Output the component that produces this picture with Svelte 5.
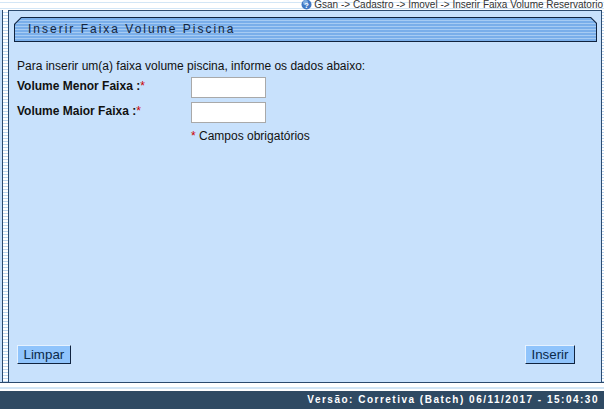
<script>
  let menor = '';
  let maior = '';
</script>

<div class="page">
  <div class="crumbs">
    <svg class="help" width="11" height="11" viewBox="0 0 11 11">
      <circle cx="5.5" cy="5.5" r="5" fill="#3f78c4" />
      <circle cx="4.5" cy="3.5" r="2.5" fill="#9cc3ee" opacity="0.7" />
      <text x="5.5" y="9" text-anchor="middle" class="q">?</text>
    </svg>
    <span>Gsan -&gt; Cadastro -&gt; Imovel -&gt; Inserir Faixa Volume Reservatorio</span>
  </div>

  <div class="middle">
    <div class="rail"></div>
    <main class="panel">
      <div class="title">
        <div class="title-inner">Inserir Faixa Volume Piscina</div>
      </div>

      <p class="intro">Para inserir um(a) faixa volume piscina, informe os dados abaixo:</p>

      <div class="row">
        <label for="menor">Volume Menor Faixa :<em>*</em></label>
        <input id="menor" bind:value={menor} />
      </div>
      <div class="row">
        <label for="maior">Volume Maior Faixa :<em>*</em></label>
        <input id="maior" bind:value={maior} />
      </div>
      <div class="required"><em>*</em> Campos obrigatórios</div>

      <div class="actions">
        <button>Limpar</button>
        <button>Inserir</button>
      </div>
    </main>
    <div class="rail-right"></div>
  </div>

  <div class="sep"></div>
  <footer>Versão: Corretiva (Batch) 06/11/2017 - 15:04:30</footer>
</div>

<style>
  :global(body) {
    margin: 0;
    background: #fff;
  }

  .page {
    width: 604px;
    height: 409px;
    display: flex;
    flex-direction: column;
    overflow: hidden;
    font-family: "Liberation Sans", Arial, sans-serif;
    font-size: 12px;
    color: #000;
  }

  .crumbs {
    height: 10px;
    flex: none;
    display: flex;
    justify-content: flex-end;
    align-items: center;
    gap: 2px;
    padding-right: 1px;
    font-size: 10px;
    line-height: 10px;
    color: #333;
    background: linear-gradient(to bottom, #fff 0 2px, #d3e6f6 2px 3px, #fff 3px 8px, #d3e6f6 8px 9px, #fff 9px);
  }

  .help {
    flex: none;
    margin-top: -1px;
  }

  .q {
    font-size: 8px;
    font-weight: bold;
    fill: #fff;
  }

  .middle {
    height: 372px;
    flex: none;
    display: flex;
    border-bottom: 1px solid #2c4a6e;
  }

  .rail {
    width: 8px;
    flex: none;
    box-sizing: border-box;
    border-left: 2px solid #c8e1fc;
    background: repeating-linear-gradient(to bottom, #fff 0 2px, #bcd6f0 2px 3px);
  }

  .rail::before {
    content: "";
    display: block;
    width: 1px;
    height: 100%;
    background: #2c4a6e;
  }

  .rail-right {
    width: 2px;
    flex: none;
    background: repeating-linear-gradient(to bottom, #fff 0 2px, #bcd6f0 2px 3px);
  }

  .panel {
    width: 594px;
    flex: none;
    box-sizing: border-box;
    padding: 6px 4px 0 5px;
    display: flex;
    flex-direction: column;
    background: #c8e1fc;
    border: 1px solid #2c4a6e;
    border-bottom: 0;
  }

  .title {
    height: 25px;
    box-sizing: border-box;
    flex: none;
    padding: 1px;
    background: #10233f;
    clip-path: polygon(7px 0, calc(100% - 6px) 0, 100% 6px, 100% 100%, 0 100%, 0 7px);
  }

  .title-inner {
    height: 23px;
    box-sizing: border-box;
    padding: 4px 0 0 13px;
    font-size: 12px;
    line-height: 15px;
    letter-spacing: 2px;
    color: #14253d;
    background: repeating-linear-gradient(to bottom, #79aeea 0 2px, #a6cbf3 2px 3px);
    clip-path: polygon(6.5px 0, calc(100% - 5.5px) 0, 100% 5.5px, 100% 100%, 0 100%, 0 6.5px);
  }

  .intro {
    margin: 17px 0 0 3px;
    line-height: 14px;
    color: #111;
  }

  .row {
    display: flex;
    align-items: center;
    height: 21px;
    margin: 4px 0 0 3px;
  }

  .row label {
    width: 174px;
    padding-bottom: 3px;
    font-weight: bold;
    color: #111;
  }

  em {
    font-style: normal;
    font-weight: normal;
    color: #cc0000;
  }

  input {
    width: 75px;
    height: 21px;
    box-sizing: border-box;
    border: 1px solid #a9a9a9;
    background: #fff;
    padding: 0 2px;
  }

  .required {
    margin: 6px 0 0 177px;
    line-height: 14px;
    color: #111;
  }

  .actions {
    margin-top: auto;
    margin-bottom: 18px;
    padding: 0 22px 0 3px;
    display: flex;
    justify-content: space-between;
  }

  button {
    height: 19px;
    padding: 0 5.5px;
    font-family: inherit;
    font-size: 13.33px;
    line-height: 15px;
    color: #0b2a4a;
    background: #90c4fc;
    border: 1px solid;
    border-color: #e6f2ff #10233f #10233f #e6f2ff;
  }

  .sep {
    height: 8px;
    flex: none;
    background: linear-gradient(to bottom, #fff 0 4px, #d3e6f6 4px 6px, #fff 6px);
  }

  footer {
    flex: 1;
    background: #2f4a63;
    color: #fff;
    font-size: 10px;
    font-weight: bold;
    letter-spacing: 1.5px;
    line-height: 18px;
    text-align: right;
    padding-right: 5px;
  }
</style>
